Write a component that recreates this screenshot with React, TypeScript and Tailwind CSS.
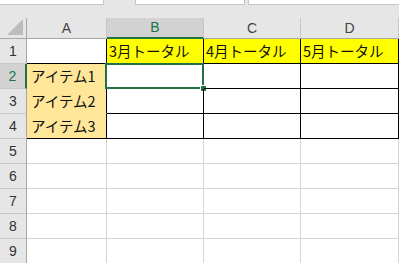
import React from "react";

const font = { fontFamily: '"Liberation Sans", Arial, sans-serif' };
const jp = { fontFamily: '"Noto Sans CJK JP", "Liberation Sans", sans-serif' };

const colWidths = ["w-[80px]", "w-[97px]", "w-[97px]", "w-[98px]"];
const letters = ["A", "B", "C", "D"];

function RowHead({ n, selected }: { n: number; selected?: boolean }) {
  return (
    <div
      className={
        "w-[27px] shrink-0 flex items-center justify-center border-b text-[14px] " +
        (selected
          ? "bg-[#d2d2d2] text-[#217346] border-b-[#c6c6c6] border-r-2 border-r-[#217346]"
          : "bg-[#e6e6e6] text-[#333] border-b-[#c6c6c6] border-r border-r-[#a6a6a6]")
      }
      style={font}
    >
      {n}
    </div>
  );
}

export default function App() {
  const items = ["アイテム1", "アイテム2", "アイテム3"];

  return (
    <div className="w-[399px] h-[263px] overflow-hidden bg-white select-none">
      {/* formula bar strip */}
      <div className="h-[18px] bg-[#e6e6e6] flex items-start">
        <div className="w-[104px] h-[5px] bg-white border-r border-b border-[#c6c6c6]" />
        <div className="ml-[31px] w-[110px] h-[5px] bg-white border-x border-b border-[#c6c6c6]" />
        <div className="ml-[3px] flex-1 h-[5px] bg-white border-l border-b border-[#c6c6c6]" />
      </div>

      {/* column headers */}
      <div className="flex h-[21px] bg-[#e6e6e6]">
        <div className="w-[27px] shrink-0 relative border-r border-b border-[#a6a6a6]">
          <svg className="absolute left-[7px] top-[1px]" width="16" height="16" viewBox="0 0 16 16">
            <polygon points="0,16 16,0 16,16" fill="#bcbcbc" />
          </svg>
        </div>
        {letters.map((l, i) => (
          <div
            key={l}
            className={
              colWidths[i] +
              " shrink-0 flex items-center justify-center text-[14px] border-r border-r-[#c6c6c6] " +
              (l === "B"
                ? "bg-[#d2d2d2] text-[#217346] border-b-2 border-b-[#217346]"
                : "text-[#444] border-b border-b-[#a6a6a6]")
            }
            style={font}
          >
            {l}
          </div>
        ))}
      </div>

      {/* row 1 */}
      <div className="flex h-[25px]">
        <RowHead n={1} />
        <div className="w-[80px] shrink-0 border-r border-b border-black" />
        {["3月トータル", "4月トータル", "5月トータル"].map((t, i) => (
          <div
            key={t}
            className={colWidths[i + 1] + " shrink-0 flex items-center pl-[2px] bg-[#ffff00] border-r border-b border-black text-[14.5px] text-[#111]"}
            style={jp}
          >
            {t}
          </div>
        ))}
      </div>

      {/* rows 2-4 */}
      {items.map((t, r) => (
        <div key={t} className="flex h-[25px]">
          <RowHead n={r + 2} selected={r === 0} />
          <div
            className={
              "w-[80px] shrink-0 flex items-center pl-[4px] bg-[#ffe699] border-r border-r-black border-b text-[14.5px] text-[#111] " +
              (r === 2 ? "border-b-black" : "border-b-[#ffe699]")
            }
            style={jp}
          >
            {t}
          </div>
          {[0, 1, 2].map((c) => (
            <div
              key={c}
              className={colWidths[c + 1] + " shrink-0 relative border-r border-b border-black"}
            >
              {r === 0 && c === 0 && (
                <div className="absolute left-[-2px] top-[-1px] right-[-1px] bottom-[-1px] border-2 border-[#217346]">
                  <div className="absolute right-[-5px] bottom-[-5px] w-[7px] h-[7px] bg-[#217346] border border-white" />
                </div>
              )}
            </div>
          ))}
        </div>
      ))}

      {/* empty rows */}
      {[5, 6, 7, 8, 9].map((n) => (
        <div key={n} className="flex h-[25px]">
          <RowHead n={n} />
          {colWidths.map((w, i) => (
            <div key={i} className={w + " shrink-0 border-r border-b border-[#d4d4d4]"} />
          ))}
        </div>
      ))}
    </div>
  );
}
